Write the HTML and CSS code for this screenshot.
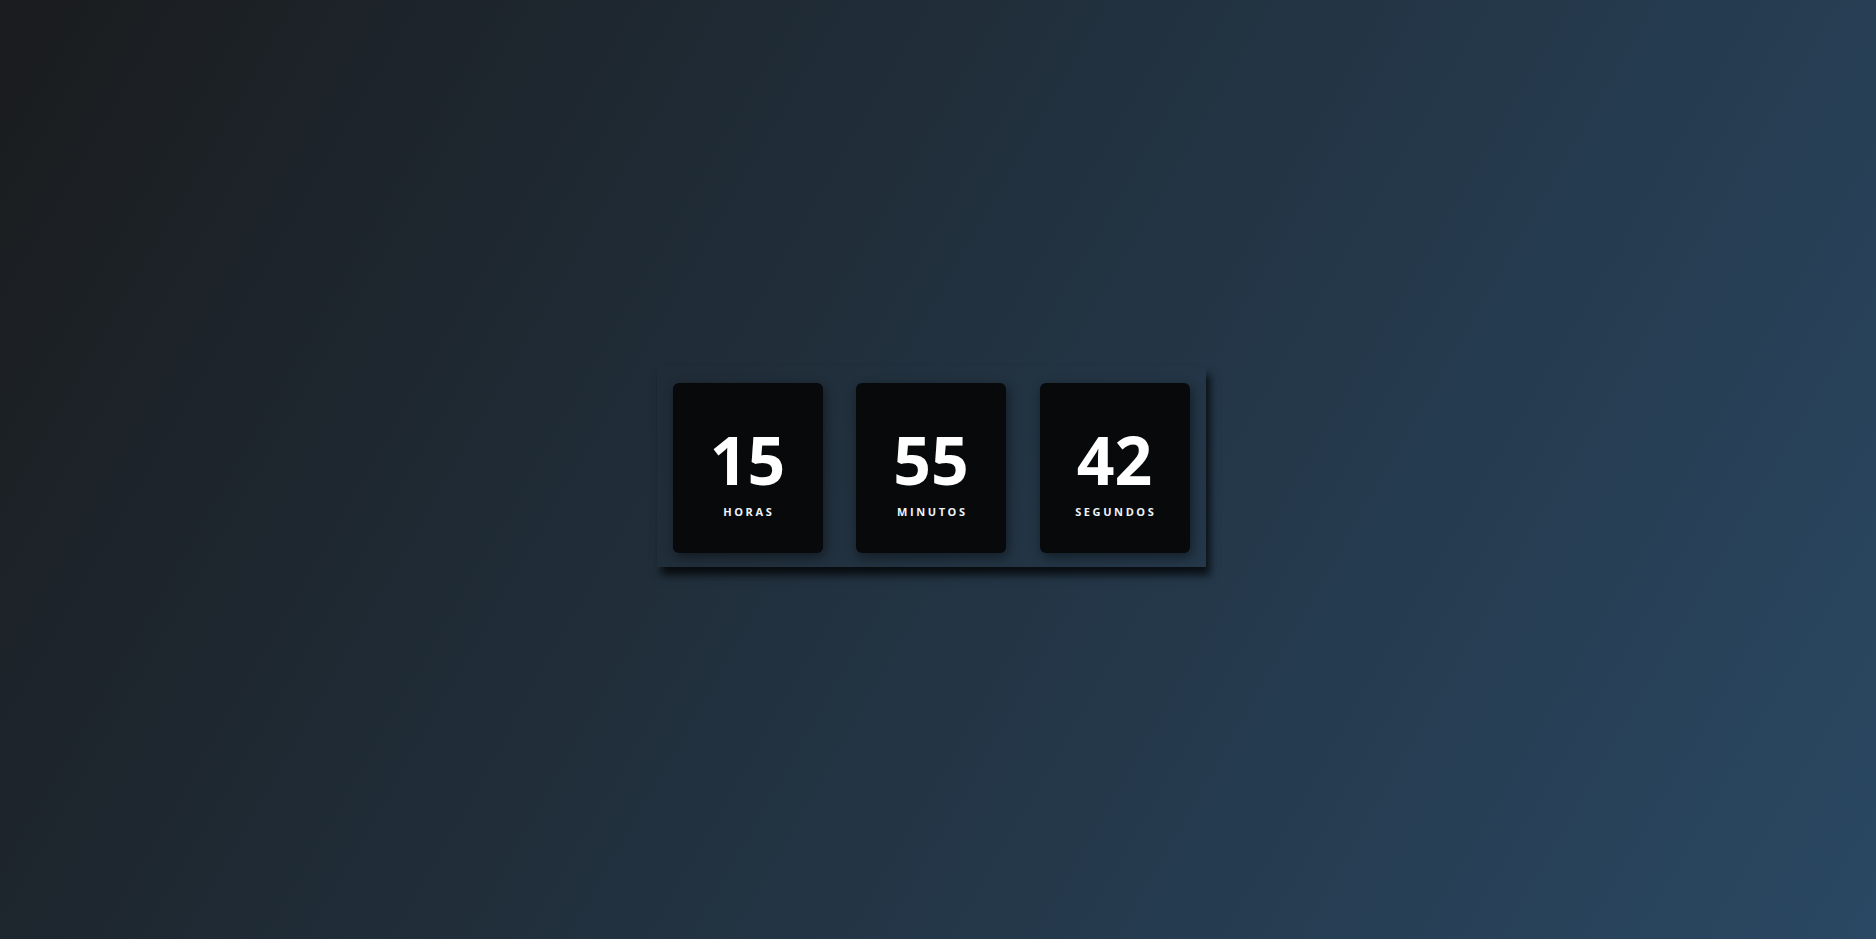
FILE: index.html
```html
<!DOCTYPE html>
<html lang="es">
<head>
<meta charset="utf-8">
<title>Cuenta regresiva</title>
<link rel="stylesheet" href="styles.css">
</head>
<body>
  <main class="countdown">
    <div class="unit">
      <span class="value">15</span>
      <span class="label">Horas</span>
    </div>
    <div class="unit">
      <span class="value">55</span>
      <span class="label">Minutos</span>
    </div>
    <div class="unit">
      <span class="value">42</span>
      <span class="label">Segundos</span>
    </div>
  </main>
</body>
</html>
```

FILE: styles.css
```css
* {
  box-sizing: border-box;
}

html,
body {
  margin: 0;
  height: 100%;
}

body {
  display: flex;
  align-items: center;
  justify-content: center;
  padding: 0 14px 5px 0;
  background: linear-gradient(120deg, #1a1c1e 0%, #2a4863 100%);
  font-family: "Open Sans", "Noto Sans", sans-serif;
  color: #fff;
}

/* panel holding the three time units */
.countdown {
  display: flex;
  gap: 33.5px;
  padding: 16px 16px 14px;
  box-shadow: 4px 8px 8px rgba(0, 0, 0, 0.75);
}

.unit {
  width: 150px;
  height: 170px;
  display: flex;
  flex-direction: column;
  align-items: center;
  justify-content: center;
  padding-top: 9px;
  gap: 11.8px;
  background: #07090b;
  border-radius: 6px;
  box-shadow: 2px 4px 12px rgba(0, 0, 0, 0.45);
}

.value {
  font-size: 66px;
  font-weight: 700;
  line-height: 66px;
}

.label {
  font-size: 11px;
  font-weight: 700;
  line-height: 15px;
  letter-spacing: 2.6px;
  text-transform: uppercase;
  margin-right: -2.6px;
  color: #eef3f8;
}
```
